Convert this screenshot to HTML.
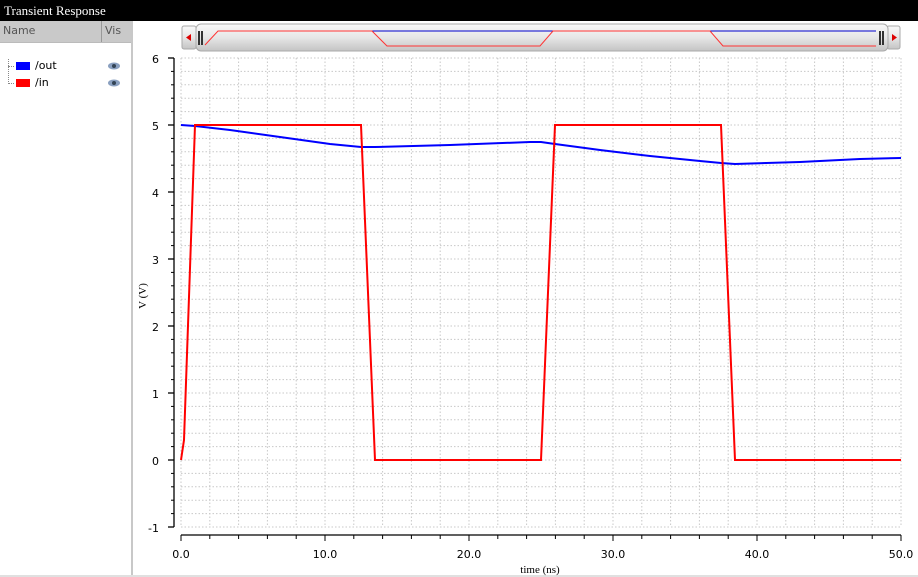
<!DOCTYPE html>
<html><head><meta charset="utf-8"><style>
*{margin:0;padding:0}
body{width:918px;height:577px;overflow:hidden;background:#fff;font-family:"DejaVu Sans","Liberation Sans",sans-serif;position:relative}
#title{position:absolute;left:0;top:0;width:918px;height:21px;background:#000;color:#fff;font-family:"Liberation Serif",serif;font-size:13px;line-height:22px;padding-left:4px;box-sizing:border-box}
#left{position:absolute;left:0;top:21px;width:131px;height:556px;background:#fff;border-right:2px solid #c8c8c8}
#hdr{height:21px;background:#c9c9c9;color:#555;font-size:11px;line-height:20px;position:relative;border-bottom:1px solid #bbb}
.sw{position:absolute;width:14px;height:8px}
.lbl{position:absolute;font-size:11px;color:#000}
</style></head><body>
<div id="title">Transient Response</div>
<div id="left">
 <div id="hdr"><span style="position:absolute;left:3px">Name</span><span style="position:absolute;left:101px;top:0;width:1px;height:21px;background:#999"></span><span style="position:absolute;left:105px">Vis</span></div>
 <div style="position:absolute;left:8px;top:38px;height:25px;border-left:1px dotted #888"></div>
 <div style="position:absolute;left:8px;top:45px;width:6px;border-top:1px dotted #888"></div>
 <div style="position:absolute;left:8px;top:62px;width:6px;border-top:1px dotted #888"></div>
 <div class="sw" style="left:16px;top:41px;background:#0000ff"></div><div class="lbl" style="left:35px;top:38px">/out</div>
 <div class="sw" style="left:16px;top:58px;background:#ff0000"></div><div class="lbl" style="left:35px;top:55px">/in</div>
 <svg style="position:absolute;left:107px;top:40px" width="14" height="30"><ellipse cx="7" cy="5" rx="6" ry="3.5" fill="#8aa0c0"/><circle cx="7" cy="5" r="2" fill="#345"/><ellipse cx="7" cy="22" rx="6" ry="3.5" fill="#8aa0c0"/><circle cx="7" cy="22" r="2" fill="#345"/></svg>
</div>
<svg style="position:absolute;left:0;top:0" width="918" height="577">
<defs><linearGradient id="g" x1="0" y1="0" x2="0" y2="1"><stop offset="0" stop-color="#fafafa"/><stop offset="0.5" stop-color="#e6e6e6"/><stop offset="1" stop-color="#c4c4c4"/></linearGradient></defs>
<rect x="0" y="575" width="918" height="2" fill="#e0e0e0"/>
<!-- scrollbar -->
<rect x="182" y="26" width="14" height="23" rx="2" fill="url(#g)" stroke="#aaa"/>
<polygon points="186,37.5 191,34 191,41" fill="#d00"/>
<rect x="887" y="26" width="13" height="23" rx="2" fill="url(#g)" stroke="#aaa"/>
<polygon points="897,37.5 892,34 892,41" fill="#d00"/>
<rect x="196" y="24" width="692" height="27" rx="5" fill="url(#g)" stroke="#aaa"/>
<rect x="198" y="31" width="2" height="14" fill="#333"/><rect x="201" y="31" width="2" height="14" fill="#333"/>
<rect x="879" y="31" width="2" height="14" fill="#333"/><rect x="882" y="31" width="2" height="14" fill="#333"/>
<polyline points="308,31 876,31" stroke="#00c" fill="none"/>
<polyline points="205,45 218,31 372,31 387,46 540,46 553,31 710,31 723,46 876,46" stroke="#f33" fill="none"/>
<!-- grid -->
<g stroke="#c8c8c8" stroke-dasharray="1.5,2" stroke-width="1">
<line x1="181" y1="58" x2="901" y2="58"/><line x1="181" y1="71.4" x2="901" y2="71.4"/><line x1="181" y1="84.8" x2="901" y2="84.8"/><line x1="181" y1="98.2" x2="901" y2="98.2"/><line x1="181" y1="111.6" x2="901" y2="111.6"/><line x1="181" y1="125" x2="901" y2="125"/><line x1="181" y1="138.4" x2="901" y2="138.4"/><line x1="181" y1="151.8" x2="901" y2="151.8"/><line x1="181" y1="165.2" x2="901" y2="165.2"/><line x1="181" y1="178.6" x2="901" y2="178.6"/><line x1="181" y1="192" x2="901" y2="192"/><line x1="181" y1="205.4" x2="901" y2="205.4"/><line x1="181" y1="218.8" x2="901" y2="218.8"/><line x1="181" y1="232.2" x2="901" y2="232.2"/><line x1="181" y1="245.6" x2="901" y2="245.6"/><line x1="181" y1="259" x2="901" y2="259"/><line x1="181" y1="272.4" x2="901" y2="272.4"/><line x1="181" y1="285.8" x2="901" y2="285.8"/><line x1="181" y1="299.2" x2="901" y2="299.2"/><line x1="181" y1="312.6" x2="901" y2="312.6"/><line x1="181" y1="326" x2="901" y2="326"/><line x1="181" y1="339.4" x2="901" y2="339.4"/><line x1="181" y1="352.8" x2="901" y2="352.8"/><line x1="181" y1="366.2" x2="901" y2="366.2"/><line x1="181" y1="379.6" x2="901" y2="379.6"/><line x1="181" y1="393" x2="901" y2="393"/><line x1="181" y1="406.4" x2="901" y2="406.4"/><line x1="181" y1="419.8" x2="901" y2="419.8"/><line x1="181" y1="433.2" x2="901" y2="433.2"/><line x1="181" y1="446.6" x2="901" y2="446.6"/><line x1="181" y1="460" x2="901" y2="460"/><line x1="181" y1="473.4" x2="901" y2="473.4"/><line x1="181" y1="486.8" x2="901" y2="486.8"/><line x1="181" y1="500.2" x2="901" y2="500.2"/><line x1="181" y1="513.6" x2="901" y2="513.6"/><line x1="181" y1="527" x2="901" y2="527"/>
<line x1="181" y1="58" x2="181" y2="527"/><line x1="209.8" y1="58" x2="209.8" y2="527"/><line x1="238.6" y1="58" x2="238.6" y2="527"/><line x1="267.4" y1="58" x2="267.4" y2="527"/><line x1="296.2" y1="58" x2="296.2" y2="527"/><line x1="325" y1="58" x2="325" y2="527"/><line x1="353.8" y1="58" x2="353.8" y2="527"/><line x1="382.6" y1="58" x2="382.6" y2="527"/><line x1="411.4" y1="58" x2="411.4" y2="527"/><line x1="440.2" y1="58" x2="440.2" y2="527"/><line x1="469" y1="58" x2="469" y2="527"/><line x1="497.8" y1="58" x2="497.8" y2="527"/><line x1="526.6" y1="58" x2="526.6" y2="527"/><line x1="555.4" y1="58" x2="555.4" y2="527"/><line x1="584.2" y1="58" x2="584.2" y2="527"/><line x1="613" y1="58" x2="613" y2="527"/><line x1="641.8" y1="58" x2="641.8" y2="527"/><line x1="670.6" y1="58" x2="670.6" y2="527"/><line x1="699.4" y1="58" x2="699.4" y2="527"/><line x1="728.2" y1="58" x2="728.2" y2="527"/><line x1="757" y1="58" x2="757" y2="527"/><line x1="785.8" y1="58" x2="785.8" y2="527"/><line x1="814.6" y1="58" x2="814.6" y2="527"/><line x1="843.4" y1="58" x2="843.4" y2="527"/><line x1="872.2" y1="58" x2="872.2" y2="527"/><line x1="901" y1="58" x2="901" y2="527"/>
</g>
<!-- axes -->
<g stroke="#000" stroke-width="1.3" fill="none">
<line x1="174" y1="58" x2="174" y2="527"/>
<line x1="181" y1="535" x2="901" y2="535"/>
<line x1="168" y1="58" x2="174" y2="58"/><line x1="168" y1="125" x2="174" y2="125"/><line x1="168" y1="192" x2="174" y2="192"/><line x1="168" y1="259" x2="174" y2="259"/><line x1="168" y1="326" x2="174" y2="326"/><line x1="168" y1="393" x2="174" y2="393"/><line x1="168" y1="460" x2="174" y2="460"/><line x1="168" y1="527" x2="174" y2="527"/>
</g>
<g stroke="#000" stroke-width="1">
<line x1="171" y1="71.4" x2="174" y2="71.4"/><line x1="171" y1="84.8" x2="174" y2="84.8"/><line x1="171" y1="98.2" x2="174" y2="98.2"/><line x1="171" y1="111.6" x2="174" y2="111.6"/><line x1="171" y1="138.4" x2="174" y2="138.4"/><line x1="171" y1="151.8" x2="174" y2="151.8"/><line x1="171" y1="165.2" x2="174" y2="165.2"/><line x1="171" y1="178.6" x2="174" y2="178.6"/><line x1="171" y1="205.4" x2="174" y2="205.4"/><line x1="171" y1="218.8" x2="174" y2="218.8"/><line x1="171" y1="232.2" x2="174" y2="232.2"/><line x1="171" y1="245.6" x2="174" y2="245.6"/><line x1="171" y1="272.4" x2="174" y2="272.4"/><line x1="171" y1="285.8" x2="174" y2="285.8"/><line x1="171" y1="299.2" x2="174" y2="299.2"/><line x1="171" y1="312.6" x2="174" y2="312.6"/><line x1="171" y1="339.4" x2="174" y2="339.4"/><line x1="171" y1="352.8" x2="174" y2="352.8"/><line x1="171" y1="366.2" x2="174" y2="366.2"/><line x1="171" y1="379.6" x2="174" y2="379.6"/><line x1="171" y1="406.4" x2="174" y2="406.4"/><line x1="171" y1="419.8" x2="174" y2="419.8"/><line x1="171" y1="433.2" x2="174" y2="433.2"/><line x1="171" y1="446.6" x2="174" y2="446.6"/><line x1="171" y1="473.4" x2="174" y2="473.4"/><line x1="171" y1="486.8" x2="174" y2="486.8"/><line x1="171" y1="500.2" x2="174" y2="500.2"/><line x1="171" y1="513.6" x2="174" y2="513.6"/>
<line x1="181" y1="535" x2="181" y2="541"/><line x1="209.8" y1="535" x2="209.8" y2="539"/><line x1="238.6" y1="535" x2="238.6" y2="539"/><line x1="267.4" y1="535" x2="267.4" y2="539"/><line x1="296.2" y1="535" x2="296.2" y2="539"/><line x1="325" y1="535" x2="325" y2="541"/><line x1="353.8" y1="535" x2="353.8" y2="539"/><line x1="382.6" y1="535" x2="382.6" y2="539"/><line x1="411.4" y1="535" x2="411.4" y2="539"/><line x1="440.2" y1="535" x2="440.2" y2="539"/><line x1="469" y1="535" x2="469" y2="541"/><line x1="497.8" y1="535" x2="497.8" y2="539"/><line x1="526.6" y1="535" x2="526.6" y2="539"/><line x1="555.4" y1="535" x2="555.4" y2="539"/><line x1="584.2" y1="535" x2="584.2" y2="539"/><line x1="613" y1="535" x2="613" y2="541"/><line x1="641.8" y1="535" x2="641.8" y2="539"/><line x1="670.6" y1="535" x2="670.6" y2="539"/><line x1="699.4" y1="535" x2="699.4" y2="539"/><line x1="728.2" y1="535" x2="728.2" y2="539"/><line x1="757" y1="535" x2="757" y2="541"/><line x1="785.8" y1="535" x2="785.8" y2="539"/><line x1="814.6" y1="535" x2="814.6" y2="539"/><line x1="843.4" y1="535" x2="843.4" y2="539"/><line x1="872.2" y1="535" x2="872.2" y2="539"/><line x1="901" y1="535" x2="901" y2="541"/>
</g>
<g font-family="DejaVu Sans, Liberation Sans, sans-serif" font-size="11" fill="#000" text-anchor="end">
<text x="159" y="63">6</text><text x="159" y="130">5</text><text x="159" y="197">4</text><text x="159" y="264">3</text><text x="159" y="331">2</text><text x="159" y="398">1</text><text x="159" y="465">0</text><text x="159" y="532">-1</text>
</g>
<g font-family="DejaVu Sans, Liberation Sans, sans-serif" font-size="11" fill="#000" text-anchor="middle">
<text x="181" y="558">0.0</text><text x="325" y="558">10.0</text><text x="469" y="558">20.0</text><text x="613" y="558">30.0</text><text x="757" y="558">40.0</text><text x="901" y="558">50.0</text>
</g>
<text x="540" y="573" font-family="Liberation Serif, serif" font-size="11" text-anchor="middle">time (ns)</text>
<text x="146" y="296" font-family="Liberation Serif, serif" font-size="11" text-anchor="middle" transform="rotate(-90 146 296)">V (V)</text>
<!-- traces -->
<polyline points="181,125 195,126 230,130 280,137 330,144 361,147 375,147 450,145 530,142 541,142 555,144 600,150 650,156 700,161 721,163 735,164 800,162 860,159 901,158" stroke="#0000ff" stroke-width="2" fill="none"/>
<polyline points="181,460 184,440 195,125 361,125 375,460 541,460 555,125 721,125 735,460 901,460" stroke="#ff0000" stroke-width="2" fill="none"/>
</svg>
</body></html>
